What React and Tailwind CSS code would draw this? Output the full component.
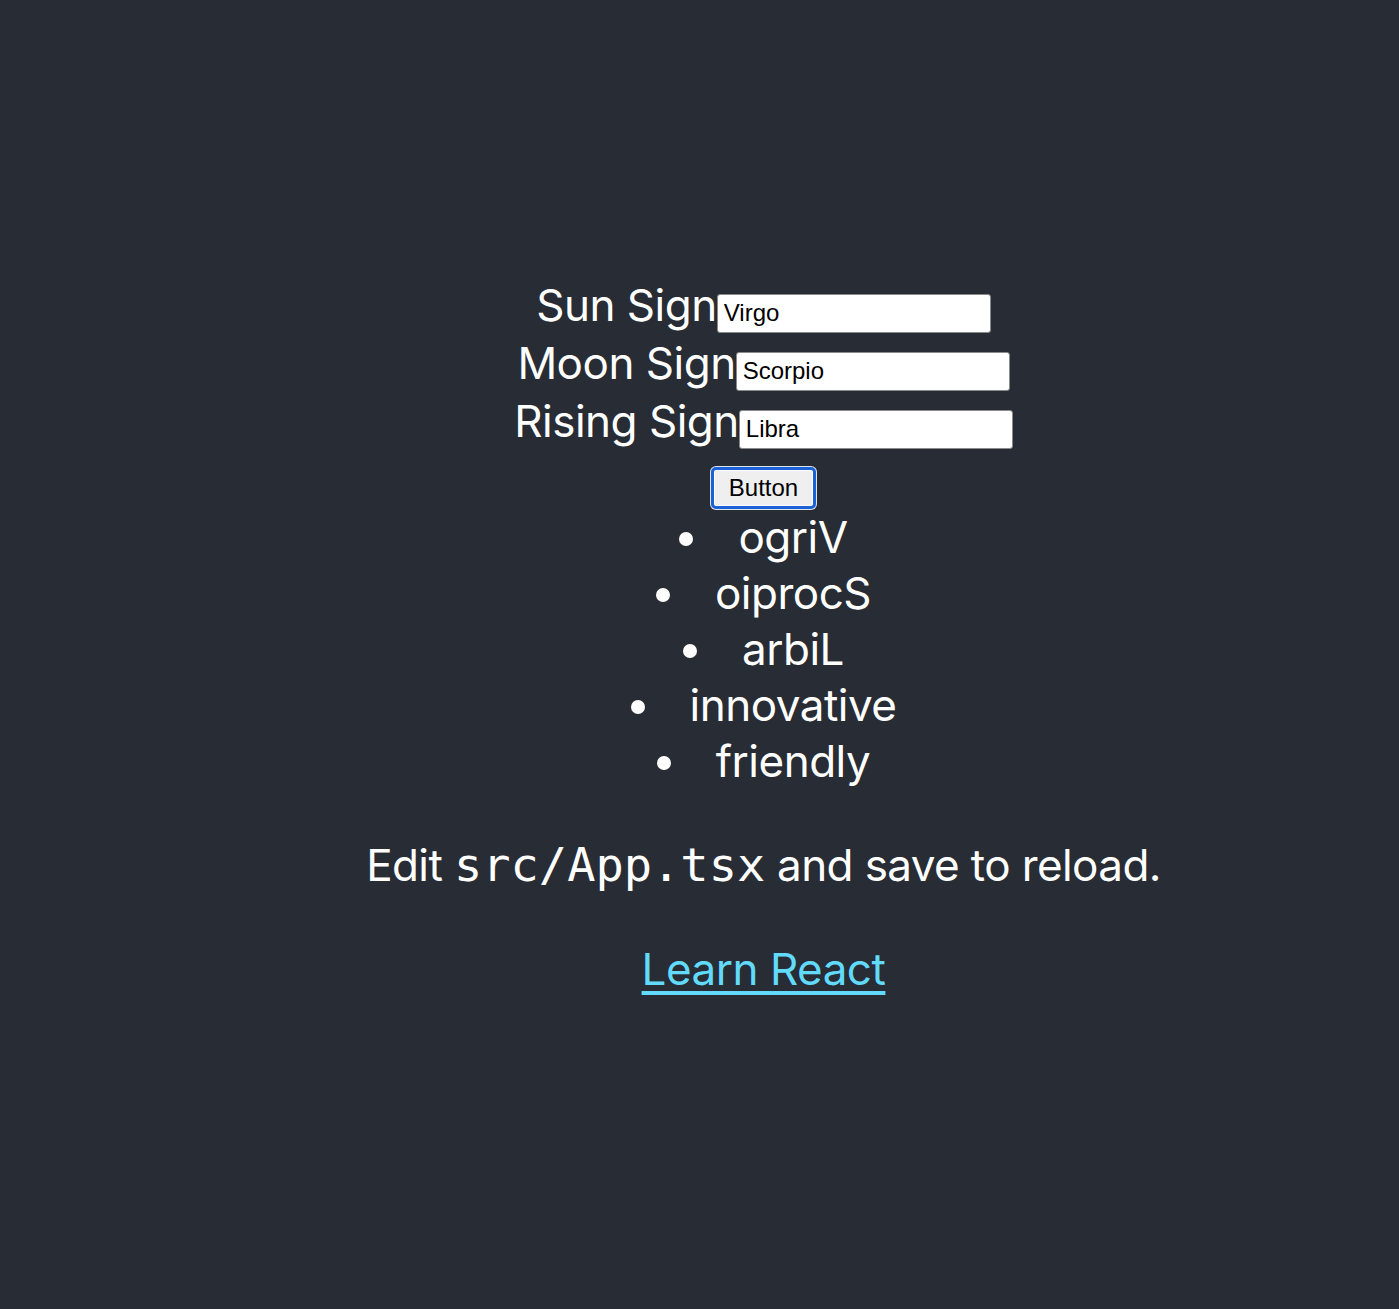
import { useState } from "react";

const signs = [
  { label: "Sun Sign", value: "Virgo" },
  { label: "Moon Sign", value: "Scorpio" },
  { label: "Rising Sign", value: "Libra" },
];

const traits = ["innovative", "friendly"];

export default function App() {
  const [values, setValues] = useState(signs.map((s) => s.value));

  const reversed = values.map((v) => v.split("").reverse().join(""));

  return (
    <div className="min-h-screen bg-[#282c34] pl-[128px] pt-[276px] font-['Inter',sans-serif] text-[44px] text-white">
      <div className="flex flex-col items-center">
        {signs.map((sign, i) => (
          <div key={sign.label} className="flex h-[58px] items-baseline">
            <span className="leading-[58px] tracking-[-0.5px]">{sign.label}</span>
            <input
              type="text"
              value={values[i]}
              onChange={(e) => {
                const next = [...values];
                next[i] = e.target.value;
                setValues(next);
              }}
              className="h-[39px] w-[274px] rounded-[3px] border border-[#8a8a8a] bg-white px-[6px] font-['Liberation_Sans',sans-serif] text-[24px] tracking-normal text-black outline-none"
            />
          </div>
        ))}

        <button className="mt-[17px] h-[42px] w-[105px] rounded-[5px] border-[3px] border-[#1a62d5] bg-[#efefef] p-0 font-['Liberation_Sans',sans-serif] text-[24px] text-black shadow-[0_0_0_1px_#dfe3ea,inset_0_0_0_1px_#ffffff]">
          Button
        </button>

        <ul className="mt-0 list-inside list-disc text-center">
          {[...reversed, ...traits].map((item) => (
            <li key={item} className="leading-[56px] tracking-[-0.5px]">
              {item}
            </li>
          ))}
        </ul>

        <p className="mt-[48px] leading-[56px] tracking-[-0.6px]">
          Edit{" "}
          <code className="font-['DejaVu_Sans_Mono',monospace] text-[47px] tracking-normal">
            src/App.tsx
          </code>{" "}
          and save to reload.
        </p>

        <a
          href="#"
          className="mt-[48px] leading-[56px] tracking-[-0.5px] text-[#61dafb] underline underline-offset-[6px]"
        >
          Learn React
        </a>
      </div>
    </div>
  );
}
